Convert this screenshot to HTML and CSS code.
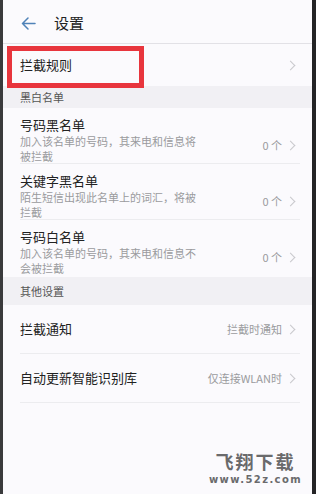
FILE: index.html
```html
<!DOCTYPE html>
<html lang="zh">
<head>
<meta charset="utf-8">
<title>设置</title>
<link rel="stylesheet" href="styles.css">
</head>
<body>
<div class="screen">
  <header class="topbar">
    <svg class="back" width="15" height="13" viewBox="0 0 15 13"><path d="M14 6.5H1.5M7 1L1.5 6.5 7 12" fill="none" stroke="#4f82b8" stroke-width="1.5" stroke-linecap="round" stroke-linejoin="round"/></svg>
    <span class="title">设置</span>
  </header>
  <div class="row first">
    <span class="label">拦截规则</span>
    <span class="right"><span class="chev"></span></span>
    <div class="mark"></div>
  </div>
  <div class="section">黑白名单</div>
  <div class="row tall">
    <div class="texts">
      <div class="label">号码黑名单</div>
      <div class="sub">加入该名单的号码，其来电和信息将被拦截</div>
    </div>
    <span class="right"><span class="val">0 个</span><span class="chev"></span></span>
  </div>
  <div class="row tall">
    <div class="texts">
      <div class="label">关键字黑名单</div>
      <div class="sub">陌生短信出现此名单上的词汇，将被拦截</div>
    </div>
    <span class="right"><span class="val">0 个</span><span class="chev"></span></span>
  </div>
  <div class="row tall nosep">
    <div class="texts">
      <div class="label">号码白名单</div>
      <div class="sub">加入该名单的号码，其来电和信息不会被拦截</div>
    </div>
    <span class="right"><span class="val">0 个</span><span class="chev"></span></span>
  </div>
  <div class="section other">其他设置</div>
  <div class="row mid">
    <span class="label">拦截通知</span>
    <span class="right"><span class="val">拦截时通知</span><span class="chev"></span></span>
  </div>
  <div class="row mid">
    <span class="label">自动更新智能识别库</span>
    <span class="right"><span class="val">仅连接WLAN时</span><span class="chev"></span></span>
  </div>
  <div class="filler">
    <div class="wm">
      <div class="wm-cn">飞翔下载</div>
      <div class="wm-en">www.52z.com</div>
    </div>
  </div>
</div>
</body>
</html>
```

FILE: styles.css
```css
* { box-sizing: border-box; }
html, body { margin: 0; padding: 0; }
body {
  width: 316px;
  height: 494px;
  overflow: hidden;
  font-family: "Noto Sans CJK SC", "Noto Sans", sans-serif;
  background: #fbfafd;
}
.screen {
  width: 316px;
  height: 494px;
  display: flex;
  flex-direction: column;
  border-left: 3px solid #3a3a3c;
  border-right: 4px solid #242426;
  background: #fbfafd;
}
.topbar {
  height: 44px;
  flex: none;
  display: flex;
  align-items: center;
  padding-left: 18px;
  padding-top: 3px;
  border-bottom: 1px solid #e2e1e6;
}
.back { display: block; }
.title {
  margin-left: 18px;
  font-size: 15px;
  color: #222;
  line-height: 20px;
}
.row {
  position: relative;
  display: flex;
  align-items: center;
  justify-content: space-between;
  margin: 0 12px 0 17px;
  border-bottom: 1px solid #ececef;
}
.row.first { height: 42px; border-bottom: none; }
.row.tall { height: 56px; align-items: flex-start; padding-top: 8px; }
.row.tall .right { margin-top: 22px; }
.row.nosep { border-bottom: none; }
.row.mid { height: 49px; }
.label {
  font-size: 13px;
  color: #222;
  line-height: 18px;
}
.sub {
  font-size: 11px;
  color: #9a9a9e;
  line-height: 15px;
  width: 180px;
}
.right {
  display: flex;
  align-items: center;
  gap: 5px;
  margin-right: 4px;
}
.val {
  font-size: 11px;
  color: #9a9a9e;
  line-height: 15px;
}
.chev {
  width: 7px;
  height: 7px;
  border-top: 1.3px solid #c8c8cc;
  border-right: 1.3px solid #c8c8cc;
  transform: rotate(45deg);
  margin-right: 2px;
}
.section {
  flex: none;
  height: 22px;
  background: #f1f0f4;
  padding-left: 17px;
  font-size: 11px;
  color: #555;
  line-height: 22px;
}
.section.other { height: 28px; line-height: 28px; margin-top: 1px; }
.mark {
  position: absolute;
  left: -13px;
  top: 2px;
  width: 137px;
  height: 42px;
  border: 5px solid #e8353d;
}
.filler {
  flex: 1;
  display: flex;
  justify-content: flex-end;
  align-items: flex-end;
  padding: 0 10px 9px 0;
}
.wm {
  display: flex;
  flex-direction: column;
  align-items: center;
  gap: 3px;
}
.wm-cn {
  font-size: 18px;
  font-weight: bold;
  color: #6a6a6c;
  letter-spacing: 2px;
  line-height: 20px;
  height: 20px;
  font-family: "Noto Sans CJK SC", sans-serif;
}
.wm-en {
  font-size: 10px;
  color: #6a6a6c;
  letter-spacing: 1.4px;
  line-height: 11px;
  height: 11px;
  font-family: "DejaVu Sans", sans-serif;
  font-weight: bold;
}
```
